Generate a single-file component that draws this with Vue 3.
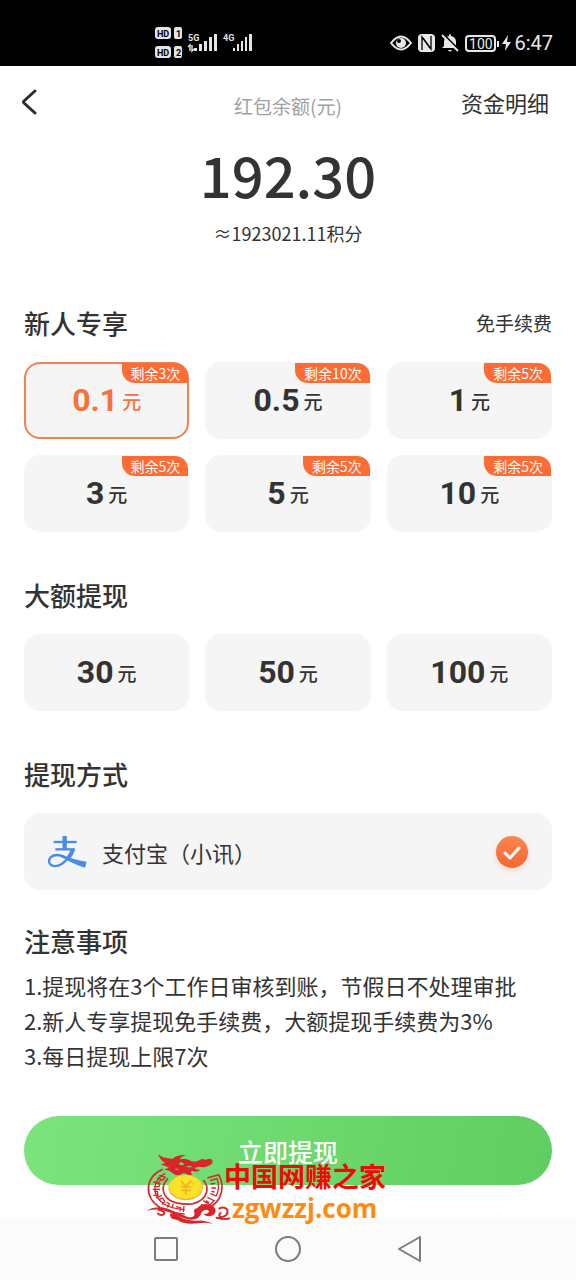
<script setup>
import { ref } from 'vue'

// 新人专享档位，left 为剩余次数
const newbieOptions = [
  { amount: '0.1', left: 3 },
  { amount: '0.5', left: 10 },
  { amount: '1', left: 5 },
  { amount: '3', left: 5 },
  { amount: '5', left: 5 },
  { amount: '10', left: 5 }
]

const largeOptions = ['30', '50', '100']

const notices = [
  '1.提现将在3个工作日审核到账，节假日不处理审批',
  '2.新人专享提现免手续费，大额提现手续费为3%',
  '3.每日提现上限7次'
]

const selected = ref('0.1')
const payMethod = ref('alipay')
</script>

<template>
  <div class="page">
    <!-- 系统状态栏 -->
    <div class="status-bar">
      <svg class="network" width="98" height="34" viewBox="0 0 98 34">
        <g fill="#e4e4e4">
          <rect x="1" y="1" width="16" height="12" rx="3" />
          <rect x="20" y="1" width="8" height="12" rx="2" />
          <rect x="1" y="20" width="16" height="12" rx="3" />
          <rect x="20" y="20" width="8" height="12" rx="2" />
          <rect x="40" y="22" width="3" height="3" />
          <rect x="45" y="18" width="3" height="7" />
          <rect x="50" y="15" width="3" height="10" />
          <rect x="55" y="11" width="3" height="14" />
          <rect x="60" y="8" width="3" height="17" />
          <rect x="79" y="22" width="2" height="3" />
          <rect x="83" y="18" width="2" height="7" />
          <rect x="87" y="15" width="2" height="10" />
          <rect x="91" y="11" width="2" height="14" />
          <rect x="95" y="8" width="3" height="17" />
          <text x="34" y="15" class="net-text">5G</text>
          <text x="69" y="15" class="net-text">4G</text>
        </g>
        <path d="M36 25v-6l-2 2M38 19v6l2-2" fill="none" stroke="#e4e4e4" stroke-width="1.4" />
        <g class="sim-text" fill="#000">
          <text x="3" y="11">HD</text>
          <text x="22" y="11">1</text>
          <text x="3" y="30">HD</text>
          <text x="22" y="30">2</text>
        </g>
      </svg>
      <div class="status-right">
        <svg width="22" height="18" viewBox="0 0 22 18">
          <path d="M1 9Q11-4 21 9Q11 22 1 9Z" fill="none" stroke="#e8e8e8" stroke-width="2" />
          <circle cx="11" cy="9" r="5" fill="#e8e8e8" />
          <circle cx="9" cy="7" r="2" fill="#000" />
        </svg>
        <svg width="17" height="18" viewBox="0 0 17 18">
          <path d="M4 0H13Q17 0 17 4V14Q17 18 13 18H4Q0 18 0 14V4Q0 0 4 0Z" fill="#e8e8e8" />
          <path d="M4 16V3L12 14M13 2V15L5 4" fill="none" stroke="#000" stroke-width="1.3" />
        </svg>
        <svg width="18" height="18" viewBox="0 0 18 18">
          <path d="M9 0q1 0 1 2q5 1 5 6v4l2 2H1l2-2V8q0-5 5-6q0-2 1-2ZM7 16h4q-2 3-4 0Z" fill="#e8e8e8" />
          <path d="M2 0l16 16" stroke="#000" stroke-width="2" />
          <path d="M1 1l16 16" stroke="#e8e8e8" stroke-width="2" />
        </svg>
        <span class="battery">100</span>
        <svg class="bolt" width="9" height="16" viewBox="0 0 9 16">
          <path d="M6 0L0 9h4l-1 7 6-9H5Z" fill="#e8e8e8" />
        </svg>
        <span class="clock">6:47</span>
      </div>
    </div>

    <header class="header">
      <button class="back" type="button" aria-label="返回">
        <svg width="16" height="28" viewBox="0 0 16 28">
          <path d="M14 3L3 13q-1 1 0 2L14 25" fill="none" stroke="#2c2c2c" stroke-width="3" stroke-linecap="round" />
        </svg>
      </button>
      <h1>红包余额(元)</h1>
      <a class="detail" href="#">资金明细</a>
    </header>

    <main class="main">
      <div class="balance">
        <strong>192.30</strong>
        <span>≈1923021.11积分</span>
      </div>

      <section class="section">
        <div class="section-head">
          <h2>新人专享</h2>
          <span>免手续费</span>
        </div>
        <div class="options">
          <button
            v-for="item in newbieOptions"
            :key="item.amount"
            type="button"
            class="option"
            :class="{ active: selected === item.amount }"
            @click="selected = item.amount"
          >
            <b>{{ item.amount }}</b><i>元</i>
            <span class="badge">剩余{{ item.left }}次</span>
          </button>
        </div>
      </section>

      <section class="section">
        <div class="section-head">
          <h2>大额提现</h2>
        </div>
        <div class="options">
          <button
            v-for="amount in largeOptions"
            :key="amount"
            type="button"
            class="option"
            :class="{ active: selected === amount }"
            @click="selected = amount"
          >
            <b>{{ amount }}</b><i>元</i>
          </button>
        </div>
      </section>

      <section class="section">
        <div class="section-head">
          <h2>提现方式</h2>
        </div>
        <label class="pay">
          <svg width="40" height="34" viewBox="0 0 120 102">
            <g fill="none" stroke="#4a8be4">
              <path d="M17 21H86" stroke-width="7" />
              <path d="M22 43H80" stroke-width="7" />
              <path d="M50 3V43" stroke-width="13" />
              <path d="M73 43Q64 72 41 87Q23 98 9 90Q-3 79 9 66Q24 54 50 66" stroke-width="7" />
            </g>
            <path d="M44 60Q75 74 116 80L111 98Q88 93 40 67Z" fill="#4a8be4" />
            <path d="M68 43H82Q76 62 64 74L55 67Q65 56 68 43Z" fill="#4a8be4" />
          </svg>
          <span class="pay-name">支付宝（小讯）</span>
          <span class="pay-check">
            <input v-model="payMethod" type="radio" name="pay" value="alipay" />
            <svg v-if="payMethod === 'alipay'" width="32" height="32" viewBox="0 0 32 32">
              <path d="M9 17l5 5 9-10" fill="none" stroke="#fff" stroke-width="3" stroke-linecap="round" stroke-linejoin="round" />
            </svg>
          </span>
        </label>
      </section>

      <section class="section notice">
        <div class="section-head">
          <h2>注意事项</h2>
        </div>
        <p v-for="line in notices" :key="line">{{ line }}</p>
      </section>

      <div class="submit-wrap">
        <button class="submit" type="button">立即提现</button>
        <!-- 水印 -->
        <div class="watermark">
          <svg width="92" height="80" viewBox="0 0 276 240">
            <g fill="none" stroke="#d8262a">
              <path d="M62 64C8 88 4 148 56 180Q82 195 128 198" stroke-width="5" />
              <path d="M70 76C30 96 28 142 66 168Q88 182 128 185" stroke-width="4" />
              <path d="M78 92C58 110 58 138 82 156Q104 170 150 168Q186 160 194 132Q198 112 184 96" stroke-width="5" />
              <path d="M196 90L230 80Q250 116 232 150Q216 180 176 186" stroke-width="5" />
              <path d="M204 98L225 92Q236 118 222 144L205 136" stroke-width="4" />
              <path d="M206 108L220 106M208 120L222 120M208 130L218 132M196 148L216 158L204 171L184 158M192 158L201 164M178 168L184 178M52 82L70 88L60 98M46 90L58 94L48 106M34 102L54 108L51 116H36M32 124H54M36 130L46 130L48 142H34M42 150L60 142M52 154L62 150L68 160L60 170M74 162L82 168L76 178M94 168L90 180M102 176L116 179L114 190M126 174L124 192" stroke-width="4" />
            </g>
            <ellipse cx="131" cy="119" rx="52" ry="38" fill="#efb526" />
            <ellipse cx="131" cy="117" rx="50" ry="35" fill="#fde229" />
            <path d="M117 98L131 116L147 98M131 116V140M116 117H148M118 127H146" fill="none" stroke="#f3b21d" stroke-width="5" />
            <g fill="#d8262a">
              <path d="M48 18Q60 32 92 32Q104 20 132 21Q117 26 113 34Q129 29 143 37Q154 44 169 38Q182 29 191 36Q207 27 212 39Q212 50 197 54Q186 60 174 56L158 59Q160 65 176 65Q164 75 150 68Q143 72 151 80Q140 83 132 77Q123 73 118 79Q106 86 94 77Q82 65 66 65Q76 59 82 60Q70 51 56 50Q64 46 70 46Q54 36 48 18Z" />
              <path d="M14 188Q42 171 78 182Q112 196 137 207Q156 211 158 197Q151 184 166 180Q180 164 200 170Q222 173 221 190Q219 202 204 205Q190 206 185 198Q201 198 201 189Q192 181 180 191Q172 218 143 215Q112 209 92 195Q55 179 14 188Z" />
              <path d="M84 198Q95 190 105 201Q130 220 166 218Q190 215 212 228Q190 221 170 226Q124 231 108 217L94 213Q84 211 84 198Z" />
            </g>
            <path d="M111 47Q118 38 126 49Q120 56 111 47M132 58Q142 49 152 58M98 64Q104 58 112 66" fill="#70d878" />
            <g fill="none" stroke="#d8262a" stroke-width="6" stroke-linecap="round">
              <path d="M50 185Q72 190 65 199Q55 204 48 197M232 181Q248 174 256 185Q260 203 238 208Q226 203 236 195M224 209Q250 216 262 211" />
            </g>
          </svg>
          <div class="watermark-text">
            <span>中国网赚之家</span>
            <em>zgwzzj.com</em>
          </div>
        </div>
      </div>
    </main>

    <!-- 系统导航键 -->
    <nav class="nav-bar">
      <button type="button" aria-label="最近任务">
        <svg width="26" height="28" viewBox="0 0 26 28">
          <rect x="2" y="3" width="22" height="22" rx="1" />
        </svg>
      </button>
      <button type="button" aria-label="主页">
        <svg width="28" height="28" viewBox="0 0 28 28">
          <circle cx="14" cy="14" r="12" />
        </svg>
      </button>
      <button type="button" aria-label="返回上一页">
        <svg width="26" height="28" viewBox="0 0 26 28">
          <path d="M23 2V26L2 14Z" stroke-linejoin="round" />
        </svg>
      </button>
    </nav>
  </div>
</template>

<style>
body {
  margin: 0;
  background: #fff;
}
</style>

<style scoped>
.page {
  min-height: 100vh;
  display: flex;
  flex-direction: column;
  background: #fff;
  color: #333;
  font-family: "Noto Sans CJK SC", sans-serif;
}

button {
  padding: 0;
  border: none;
  background: none;
  color: inherit;
  font-family: inherit;
  cursor: pointer;
}

svg {
  display: block;
}

/* 状态栏 */
.status-bar {
  box-sizing: border-box;
  height: 66px;
  padding: 20px 23px 0 154px;
  display: flex;
  align-items: center;
  justify-content: space-between;
  background: #000;
  color: #e8e8e8;
}

.net-text {
  font: bold 9px "Roboto", sans-serif;
}

.sim-text {
  font: bold 9px "Roboto", sans-serif;
}

.status-right {
  display: flex;
  align-items: center;
  gap: 6px;
}

.battery {
  position: relative;
  box-sizing: border-box;
  width: 31px;
  height: 17px;
  border: 2px solid #e8e8e8;
  border-radius: 4px;
  font: 14px/14px "Roboto", sans-serif;
  text-align: center;
}

/* 电池正极 */
.battery::after {
  content: '';
  position: absolute;
  top: 4px;
  right: -5px;
  width: 2px;
  height: 6px;
  background: #e8e8e8;
}

.clock {
  margin-left: -3px;
  font: 20px/24px "Roboto", sans-serif;
}

/* 顶部 */
.header {
  height: 72px;
  padding: 0 27px;
  display: grid;
  grid-template-columns: 1fr auto 1fr;
  align-items: center;
}

.back {
  justify-self: start;
  margin-left: -6px;
}

.header h1 {
  margin: 8px 0 0;
  font-size: 19px;
  font-weight: 400;
  line-height: 28px;
  color: #a0a0a0;
}

.detail {
  justify-self: end;
  font-size: 22px;
  line-height: 32px;
  color: #333;
  text-decoration: none;
}

.main {
  flex: 1;
  padding: 0 24px 32px;
}

.balance {
  display: flex;
  flex-direction: column;
  align-items: center;
  gap: 9px;
}

.balance strong {
  font-size: 56px;
  font-weight: 500;
  line-height: 72px;
}

.balance span {
  font-size: 18px;
  line-height: 28px;
}

.section {
  margin-top: 45px;
}

.balance + .section {
  margin-top: 58px;
}

.section-head {
  margin-bottom: 21px;
  display: flex;
  align-items: center;
  justify-content: space-between;
}

.section-head h2 {
  margin: 0;
  font-size: 26px;
  font-weight: 500;
  line-height: 36px;
}

.section-head span {
  font-size: 19px;
  line-height: 28px;
}

/* 金额选项 */
.options {
  display: grid;
  grid-template-columns: repeat(3, 1fr);
  gap: 16px;
}

.option {
  position: relative;
  box-sizing: border-box;
  height: 77px;
  display: flex;
  align-items: center;
  justify-content: center;
  gap: 4px;
  border: 2px solid #f5f5f5;
  border-radius: 16px;
  background: #f5f5f5;
  line-height: 73px;
}

.option b {
  font-family: "Roboto", sans-serif;
  font-size: 32px;
  font-weight: 700;
}

.option i {
  font-size: 19px;
  font-style: normal;
  font-weight: 500;
}

.option.active {
  border-color: #f08450;
  color: #f9703a;
}

.badge {
  position: absolute;
  top: -1px;
  right: -1px;
  padding: 0 8px 0 9px;
  border-radius: 0 13px 0 13px;
  background: #fd6c34;
  color: #fff;
  font-size: 14px;
  line-height: 20px;
}

/* 提现方式 */
.pay {
  height: 77px;
  padding: 0 24px;
  display: flex;
  align-items: center;
  border-radius: 16px;
  background: #f5f5f5;
}

.pay-name {
  flex: 1;
  margin-left: 14px;
  font-size: 22px;
  line-height: 32px;
}

.pay-check {
  position: relative;
}

.pay-check input {
  display: block;
  width: 32px;
  height: 32px;
  margin: 0;
  appearance: none;
  border-radius: 50%;
  background: #ddd;
}

.pay-check input:checked {
  background: linear-gradient(#fb854f, #f96632);
  box-shadow: 0 3px 6px rgba(253, 108, 52, 0.2);
}

.pay-check svg {
  position: absolute;
  top: 0;
  left: 0;
  pointer-events: none;
}

/* 注意事项 */
.notice {
  margin-top: 33px;
}

.notice .section-head {
  margin-bottom: 9px;
}

.notice p {
  margin: 0;
  font-size: 22px;
  line-height: 35px;
}

.submit-wrap {
  position: relative;
  margin-top: 43px;
}

.submit {
  display: block;
  width: 100%;
  height: 69px;
  border-radius: 35px;
  background: linear-gradient(100deg, #7be57c, #5fcd62);
  color: #fff;
  font-size: 25px;
  font-weight: 500;
}

/* 水印盖在按钮上方 */
.watermark {
  position: absolute;
  top: 32px;
  left: 118px;
  display: flex;
  pointer-events: none;
}

.watermark-text {
  display: flex;
  flex-direction: column;
  margin-left: -10px;
  padding-top: 10px;
  white-space: nowrap;
}

.watermark-text span {
  color: #f90505;
  font-size: 27px;
  font-weight: 700;
  line-height: 36px;
}

.watermark-text em {
  margin-left: 8px;
  color: #ff8a10;
  font: normal 700 26px/28px "Open Sans", sans-serif;
}

/* 导航键 */
.nav-bar {
  height: 63px;
  display: flex;
  align-items: center;
  justify-content: center;
  gap: 95px;
  background: #fbfbfb;
}

.nav-bar svg {
  fill: none;
  stroke: #7c7c7c;
  stroke-width: 2;
}
</style>
